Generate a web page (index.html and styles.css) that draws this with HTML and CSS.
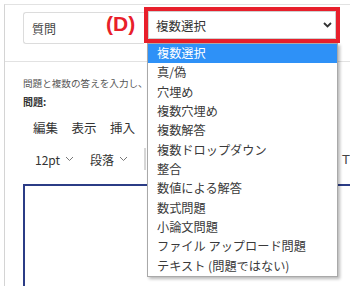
FILE: index.html
```html
<!DOCTYPE html>
<html lang="ja">
<head>
<meta charset="utf-8">
<link rel="stylesheet" href="styles.css">
</head>
<body>
<div class="panel">
  <div class="header">
    <div class="qname">質問</div>
    <div class="mark">(D)</div>
    <div class="hl">
      <div class="select">
        <span>複数選択</span>
        <svg class="chev" width="9" height="6" viewBox="0 0 9 6"><polyline points="1,1 4.5,4.5 8,1" fill="none" stroke="#333" stroke-width="1.8"/></svg>
      </div>
      <ul class="list">
        <li class="sel">複数選択</li>
        <li>真/偽</li>
        <li>穴埋め</li>
        <li>複数穴埋め</li>
        <li>複数解答</li>
        <li>複数ドロップダウン</li>
        <li>整合</li>
        <li>数値による解答</li>
        <li>数式問題</li>
        <li>小論文問題</li>
        <li>ファイル アップロード問題</li>
        <li>テキスト (問題ではない)</li>
      </ul>
    </div>
  </div>
  <div class="content">
    <p class="hint">問題と複数の答えを入力し、正しい答えを選択してください。</p>
    <div class="label">問題:</div>
    <div class="menu">
      <span>編集</span><span>表示</span><span>挿入</span><span>書式</span><span>ツール</span><span>表</span>
    </div>
    <div class="toolbar">
      <span class="dd">12pt <svg width="9" height="6" viewBox="0 0 9 6"><polyline points="1,1 4.5,4.5 8,1" fill="none" stroke="#777" stroke-width="1"/></svg></span>
      <span class="dd">段落 <svg width="9" height="6" viewBox="0 0 9 6"><polyline points="1,1 4.5,4.5 8,1" fill="none" stroke="#777" stroke-width="1"/></svg></span>
      <span class="sep"></span>
      <span class="tools">T</span>
    </div>
    <div class="editor"></div>
  </div>
</div>
</body>
</html>
```

FILE: styles.css
```css
html, body {
  margin: 0;
  padding: 0;
  background: #fff;
}
body {
  width: 350px;
  height: 286px;
  overflow: hidden;
  font-family: "Noto Sans CJK JP", "Noto Sans", sans-serif;
  color: #333;
}
.panel {
  margin: 4px 0 0 4px;
  border-left: 1px solid #d4d4d4;
  border-top: 1px solid #e2e2e2;
  height: 300px;
  width: 400px;
}
.header {
  position: relative;
  display: flex;
  align-items: flex-start;
  height: 54px;
  padding: 2px 0 0 18px;
  border-bottom: 1px solid #e2e2e2;
}
.qname {
  box-sizing: border-box;
  width: 121px;
  height: 32px;
  margin-top: 5px;
  border: 1px solid #dcdcdc;
  border-right: none;
  border-radius: 3px 0 0 3px;
  padding-left: 8px;
  display: flex;
  align-items: center;
  font-size: 12px;
  color: #444;
}
.mark {
  position: absolute;
  left: 101px;
  top: 7px;
  font-family: "Liberation Sans", Arial, sans-serif;
  font-weight: bold;
  font-size: 21px;
  line-height: 24px;
  color: #e8202a;
}
.hl {
  position: relative;
  box-sizing: border-box;
  width: 196px;
  height: 36px;
  border: 4px solid #e81f2b;
}
.select {
  box-sizing: border-box;
  height: 100%;
  border: 1px solid #cfcfcf;
  display: flex;
  align-items: center;
  justify-content: space-between;
  padding: 0 3px 0 7px;
  font-size: 12.5px;
  color: #333;
}
.chev {
  display: block;
}
.list {
  position: absolute;
  left: -1px;
  top: 32px;
  z-index: 10;
  box-sizing: border-box;
  width: 191px;
  margin: 0;
  padding: 0;
  list-style: none;
  background: #fff;
  border: 1px solid #a9a9a9;
  box-shadow: 2px 2px 3px rgba(0, 0, 0, 0.28);
}
.list li {
  height: 19.33px;
  line-height: 19.33px;
  padding-left: 9px;
  font-size: 12.2px;
  color: #3a3a3a;
  white-space: nowrap;
}
.list li.sel {
  background: #2e91f7;
  color: #fff;
}
.content {
  padding-left: 18px;
}
.hint {
  margin: 15px 0 0 0;
  font-size: 9.6px;
  line-height: 12px;
  color: #555;
  white-space: nowrap;
}
.label {
  margin-top: 7px;
  font-size: 10px;
  line-height: 12px;
  font-weight: bold;
  color: #333;
}
.menu {
  display: flex;
  gap: 13.5px;
  margin-top: 12px;
  padding-left: 10px;
  font-size: 12.5px;
  line-height: 16px;
  color: #333;
}
.toolbar {
  display: flex;
  align-items: center;
  height: 22px;
  margin-top: 12px;
  padding-left: 12px;
  font-size: 12px;
  color: #333;
}
.dd {
  display: flex;
  align-items: center;
  gap: 5px;
  margin-right: 16px;
}
.sep {
  width: 2px;
  height: 22px;
  background: #d6d6d6;
  margin-left: 0;
}
.tools {
  margin-left: 196px;
  font-family: "Liberation Sans", Arial, sans-serif;
  font-size: 13px;
  color: #444;
}
.editor {
  box-sizing: border-box;
  width: 360px;
  height: 140px;
  margin-top: 14px;
  border: 2px solid #2b3c86;
}
```
